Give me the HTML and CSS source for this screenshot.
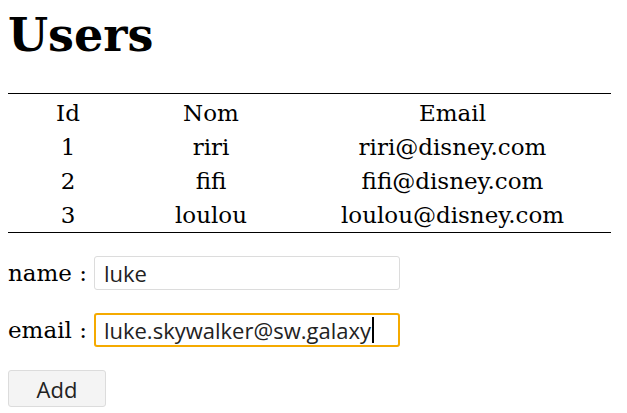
FILE: index.html
```html
<!DOCTYPE html>
<html>
<head>
<meta charset="utf-8">
<link rel="stylesheet" href="styles.css">
</head>
<body>
<h1 class="title">Users</h1>
<table class="users">
  <colgroup><col class="c-id"><col class="c-nom"><col class="c-email"></colgroup>
  <thead>
    <tr><th>Id</th><th>Nom</th><th>Email</th></tr>
  </thead>
  <tbody>
    <tr><td>1</td><td>riri</td><td>riri@disney.com</td></tr>
    <tr><td>2</td><td>fifi</td><td>fifi@disney.com</td></tr>
    <tr><td>3</td><td>loulou</td><td>loulou@disney.com</td></tr>
  </tbody>
</table>
<form class="form">
  <div class="field"><label class="label">name :</label><input class="input" type="text" value="luke"></div>
  <div class="field"><label class="label">email :</label><div class="input focused">luke.skywalker@sw.galaxy<span class="caret"></span></div></div>
  <button class="btn" type="button">Add</button>
</form>
</body>
</html>
```
FILE: styles.css
```css
html, body { background: #fff; }
body {
  margin: 8px;
  font-family: "DejaVu Serif", serif;
  font-size: 23px;
  color: #000;
}
.title {
  font-size: 46px;
  font-weight: bold;
  margin: 0;
  padding-top: 0;
  line-height: 54px;
  height: 85px;
}
.users {
  width: 603px;
  border-collapse: collapse;
  border-top: 1px solid #000;
  border-bottom: 1px solid #000;
  table-layout: fixed;
}
.c-id { width: 120px; }
.c-nom { width: 166px; }
.c-email { width: 317px; }
.users th, .users td {
  font-weight: normal;
  text-align: center;
  padding: 0;
  height: 34px;
  line-height: 34px;
}
.users thead tr th { padding-top: 2px; }
.form {
  margin-top: 23px;
  display: flex;
  flex-direction: column;
  align-items: flex-start;
  gap: 23px;
}
.field {
  display: flex;
  align-items: center;
  gap: 7px;
}
.input {
  box-sizing: border-box;
  width: 306px;
  height: 34px;
  border: 1px solid #dcdcdc;
  border-radius: 3px;
  padding: 0 9px;
  font-family: "Open Sans", sans-serif;
  font-size: 22px;
  color: #222;
  background: #fff;
  margin: 0;
  outline: none;
  display: flex;
  align-items: center;
}
.focused {
  border: 2px solid #f5aa00;
  padding: 0 8px;
}
.caret {
  display: inline-block;
  width: 2px;
  height: 26px;
  background: #000;
  margin-left: 1px;
}
.btn {
  box-sizing: border-box;
  width: 98px;
  height: 37px;
  border: 1px solid #dcdcdc;
  border-radius: 3px;
  background: #f4f4f4;
  font-family: "Open Sans", sans-serif;
  font-size: 22px;
  color: #222;
  padding: 0;
}
```
